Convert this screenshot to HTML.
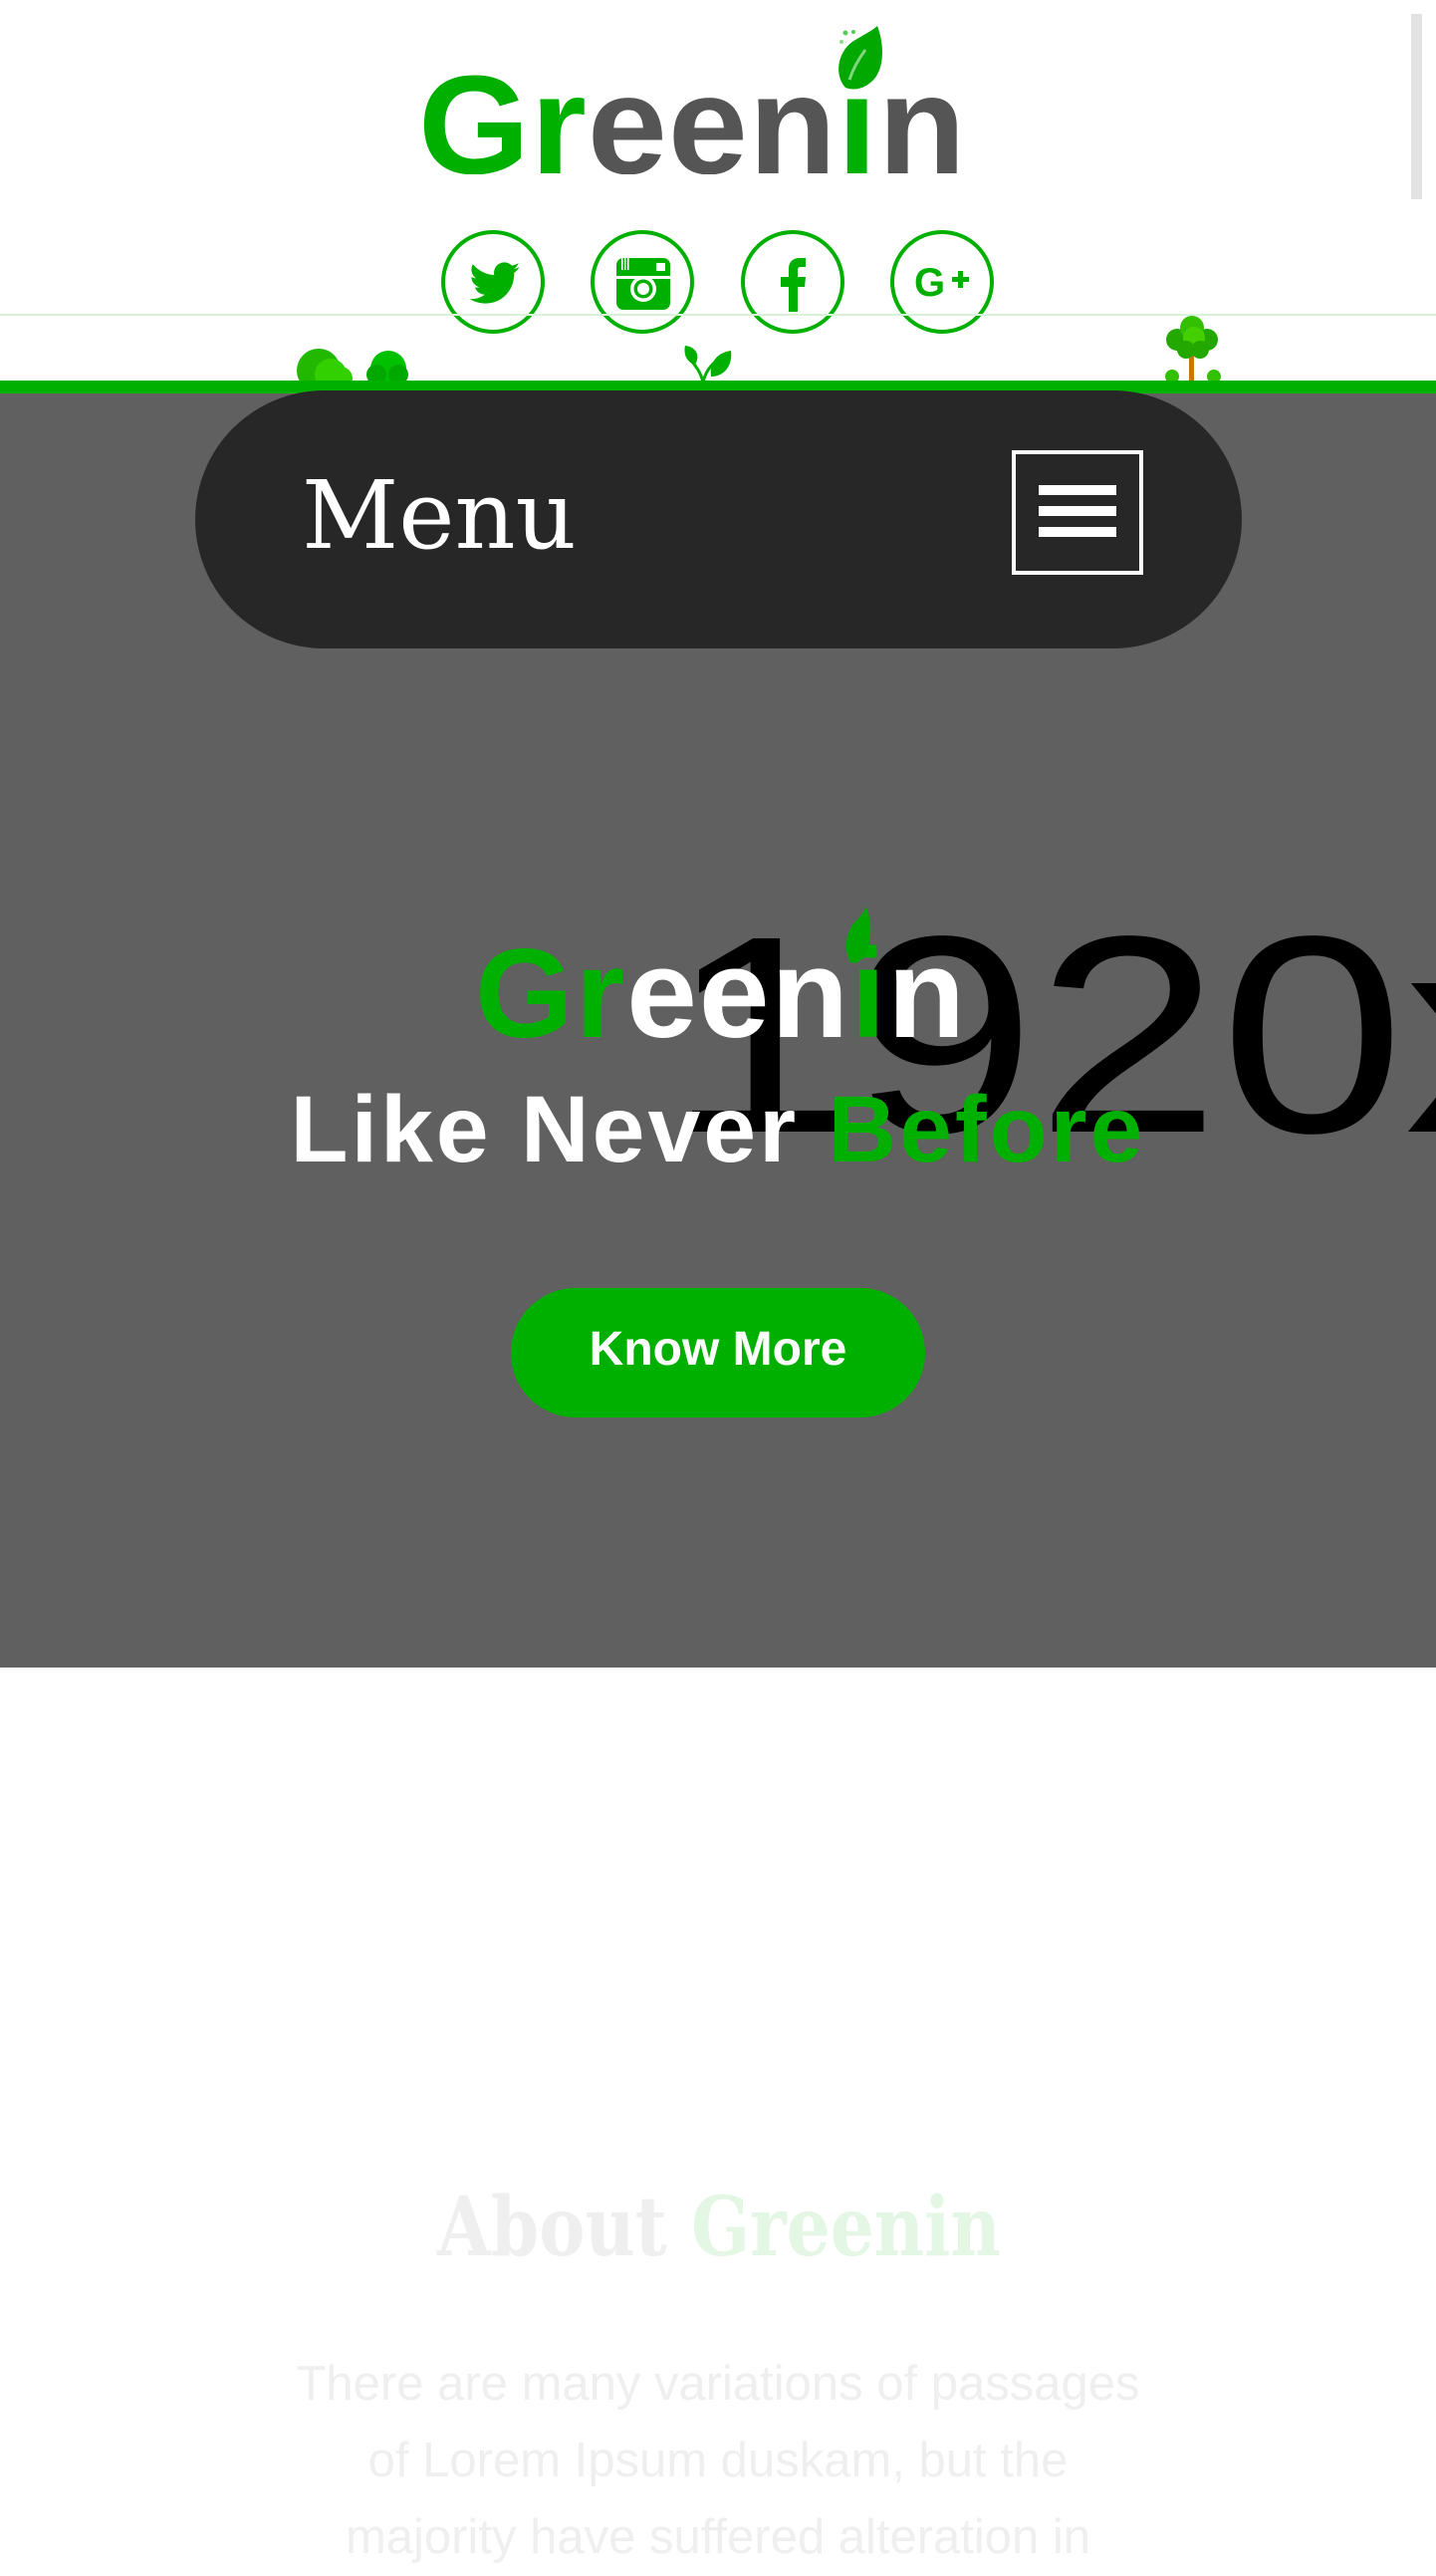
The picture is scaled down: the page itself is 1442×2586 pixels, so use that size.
<!DOCTYPE html>
<html><head><meta charset="utf-8">
<style>
*{margin:0;padding:0;box-sizing:border-box}
html,body{width:1442px;height:2562px;overflow:hidden;background:#fff;font-family:"Liberation Sans",sans-serif}
.a{position:absolute;white-space:nowrap;line-height:1}
.g{color:#00b000}
.circ{position:absolute;width:104px;height:104px;border:4px solid #00b000;border-radius:50%;top:231px}
.circ svg{position:absolute;left:0;top:0;width:96px;height:96px}
</style></head><body>

<!-- top logo -->
<div class="a" style="left:420px;top:55px;width:560px;height:120px;overflow:hidden">
<div class="a" style="left:0;top:0;font-size:141px;font-weight:bold;letter-spacing:1px;transform:scaleX(1.02);transform-origin:0 0;color:#555"><span class="g">Gr</span>een<span class="g">i</span>n</div>
</div>
<div class="a" style="left:830px;top:55px;width:70px;height:38px;background:#fff"></div>
<svg class="a" style="left:835px;top:20px" width="60" height="76" viewBox="0 0 60 76">
<path d="M14 68 C2 55 6 30 24 20 C34 14 42 10 46 6 C52 22 54 44 44 58 C36 68 24 72 14 68Z" fill="#00a800"/>
<path d="M18 60 C22 48 28 38 34 30" stroke="#7fd67f" stroke-width="3" fill="none"/>
<circle cx="14" cy="13" r="2.5" fill="#5c5"/><circle cx="22" cy="12" r="2" fill="#5c5"/><circle cx="10" cy="22" r="2" fill="#8d8"/>
</svg>

<!-- social -->
<div class="circ" style="left:443px"><svg viewBox="0 0 96 96"><path d="M75 33c-2 1-4 1.6-6 1.8 2.2-1.3 3.8-3.3 4.6-5.7-2 1.2-4.3 2-6.6 2.5a10.4 10.4 0 0 0-17.7 9.5c-8.6-.4-16.3-4.6-21.4-10.8-2.8 4.8-1.4 11 3.2 14-1.7 0-3.3-.5-4.7-1.3 0 5 3.6 9.3 8.3 10.3-1.5.4-3.1.5-4.7.2 1.3 4.2 5.2 7.1 9.7 7.2-4.3 3.4-9.7 4.9-15.2 4.3 4.7 3 10.2 4.6 15.8 4.6 19.2 0 29.6-16.1 29-30.7 2-1.4 3.7-3.3 5.1-5.4z" fill="#00b000"/></svg></div>
<div class="circ" style="left:593px"><svg viewBox="0 0 96 96"><rect x="22" y="24" width="54" height="52" rx="7" fill="#00b000"/><rect x="22" y="42" width="54" height="3" fill="#fff"/><circle cx="49" cy="55" r="13" fill="#fff"/><circle cx="49" cy="55" r="9.5" fill="#00b000"/><circle cx="49" cy="55" r="6" fill="#fff"/><rect x="62" y="29" width="9" height="8" fill="#fff"/><rect x="27" y="24" width="1.5" height="12" fill="#fff"/><rect x="30" y="24" width="1.5" height="12" fill="#fff"/><rect x="33" y="24" width="1.5" height="12" fill="#fff"/></svg></div>
<div class="circ" style="left:744px"><svg viewBox="0 0 96 96"><path d="M44 78V53h-8v-10h8v-8c0-7 4-11 11-11h6v9h-5c-2 0-3 1-3 3v7h8l-1 10h-7v25z" fill="#00b000"/></svg></div>
<div class="circ" style="left:894px"><svg viewBox="0 0 96 96"><text x="20" y="62" font-family="Liberation Sans" font-weight="bold" font-size="40" fill="#00b000">G</text><path d="M58 43h6v-6h5v6h6v5h-6v6h-5v-6h-6z" fill="#00b000"/></svg></div>

<!-- scroll bar -->
<div class="a" style="left:1417px;top:14px;width:11px;height:186px;background:#e2e2e2"></div>

<!-- thin line -->
<div class="a" style="left:0;top:315px;width:1442px;height:2px;background:#d8f3d8"></div>

<!-- decorations -->
<svg class="a" style="left:290px;top:340px" width="120" height="45" viewBox="0 0 120 45">
<circle cx="30" cy="32" r="22" fill="#22b800"/><circle cx="42" cy="36" r="16" fill="#33d000"/><circle cx="52" cy="40" r="12" fill="#33d000"/>
<circle cx="100" cy="30" r="18" fill="#00c000"/><circle cx="88" cy="36" r="10" fill="#00a800"/><circle cx="110" cy="36" r="10" fill="#00a800"/>
<rect x="0" y="42" width="120" height="3" fill="#00b000"/>
</svg>
<svg class="a" style="left:684px;top:344px" width="54" height="40" viewBox="0 0 54 40">
<path d="M22 40 C20 30 14 22 8 16" stroke="#00b000" stroke-width="3" fill="none"/>
<path d="M22 40 C24 30 30 22 36 18" stroke="#00b000" stroke-width="3" fill="none"/>
<path d="M4 3 C14 4 20 12 14 22 C6 20 2 12 4 3Z" fill="#00b000"/>
<path d="M50 8 C52 22 44 34 30 34 C28 20 36 10 50 8Z" fill="#00b000"/>
</svg>
<svg class="a" style="left:1165px;top:315px" width="64" height="70" viewBox="0 0 64 70">
<rect x="29" y="40" width="5" height="28" fill="#c87800"/>
<circle cx="32" cy="26" r="16" fill="#22a800"/><circle cx="17" cy="26" r="11" fill="#22a800"/><circle cx="47" cy="26" r="11" fill="#22a800"/><circle cx="32" cy="14" r="12" fill="#33c000"/><circle cx="34" cy="24" r="11" fill="#44d000"/><circle cx="26" cy="36" r="9" fill="#22a800"/><circle cx="40" cy="36" r="9" fill="#22a800"/>
<circle cx="12" cy="63" r="7" fill="#33c000"/><circle cx="54" cy="63" r="7" fill="#33c000"/>
</svg>

<!-- green bar -->
<div class="a" style="left:0;top:382px;width:1442px;height:13px;background:#00b000"></div>

<!-- hero -->
<div class="a" style="left:0;top:395px;width:1442px;height:1279px;background:#606060;overflow:hidden">
<div class="a" style="left:670px;top:503px;font-size:282px;color:#000;transform:scaleX(1.18);transform-origin:0 0">1920x</div>
</div>

<!-- menu pill -->
<div class="a" style="left:196px;top:392px;width:1051px;height:259px;border-radius:130px;background:#272727"></div>
<div class="a" style="left:303px;top:471px;font-size:95px;font-family:'DejaVu Serif',serif;color:#fff">Menu</div>
<div class="a" style="left:1016px;top:452px;width:132px;height:125px;border:4px solid #fff"></div>
<div class="a" style="left:1043px;top:487px;width:78px;height:10px;background:#fff"></div>
<div class="a" style="left:1043px;top:508px;width:78px;height:10px;background:#fff"></div>
<div class="a" style="left:1043px;top:529px;width:78px;height:10px;background:#fff"></div>

<!-- hero logo -->
<div class="a" style="left:477px;top:934px;font-size:127px;font-weight:bold;letter-spacing:2px;color:#fff"><span class="g">Gr</span>een<span class="g">i</span>n</div>
<svg class="a" style="left:846px;top:908px" width="30" height="62" viewBox="0 0 30 62">
<path d="M8 58 C0 44 4 26 14 16 C20 10 22 6 24 2 C30 18 30 40 22 52 C18 58 12 60 8 58Z" fill="#00a800"/>
</svg>
<div class="a" style="left:0;top:1087px;width:1442px;text-align:center;font-size:95px;font-weight:bold;letter-spacing:3px;color:#fff">Like Never <span class="g">Before</span></div>

<!-- button -->
<div class="a" style="left:513px;top:1293px;width:416px;height:130px;border-radius:65px;background:#00b000"></div>
<div class="a" style="left:513px;top:1331px;width:416px;text-align:center;font-size:48px;font-weight:bold;color:#fff">Know More</div>

<!-- about -->
<div class="a" style="left:439px;top:2195px;font-size:82px;font-weight:bold;font-family:'DejaVu Serif',serif;color:#efefef;transform:scaleX(0.845);transform-origin:0 0">About <span style="color:#e4f6e4">Greenin</span></div>
<div class="a" style="left:221px;top:2355px;width:1000px;text-align:center;font-size:49px;line-height:77px;color:#efefef;white-space:normal">There are many variations of passages<br>of Lorem Ipsum duskam, but the<br>majority have suffered alteration in</div>

</body></html>
